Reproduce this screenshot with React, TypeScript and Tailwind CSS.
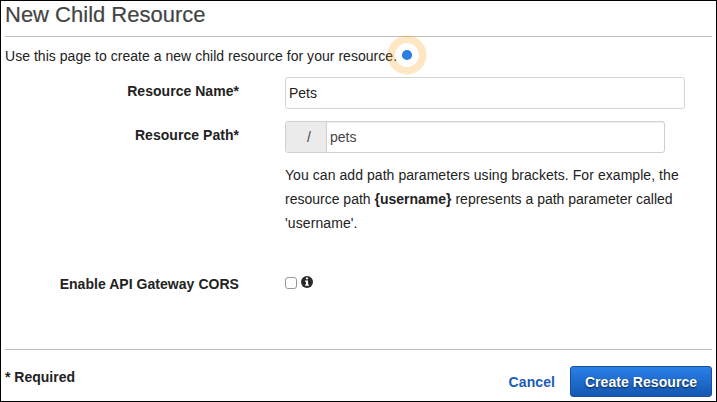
import React from "react";

function Label({ children }: { children: React.ReactNode }) {
  return (
    <div className="w-[238px] shrink-0 text-right font-bold whitespace-nowrap leading-6 tracking-[0.04px]">
      {children}
    </div>
  );
}

function InfoIcon() {
  return (
    <svg className="-mt-[2px] ml-1 h-3 w-3 shrink-0" viewBox="0 0 12 12" aria-label="Info">
      <circle cx="6" cy="6" r="6" fill="#2a2a2a" />
      <path d="M5 1.6h2v1.7H5zM4 4.6h3v3.8h1v1.3H4V8.4h1V5.8H4z" fill="#fff" />
    </svg>
  );
}

function Beacon() {
  return (
    <svg className="absolute left-[382px] -top-[9px] h-10 w-10" viewBox="0 0 40 40">
      <circle cx="20" cy="20" r="15.7" fill="none" stroke="#ff9900" strokeOpacity="0.23" strokeWidth="7.6" />
      <circle cx="20" cy="20" r="5.1" fill="#2e7de0" />
    </svg>
  );
}

export default function App() {
  return (
    <div className="flex h-[402px] w-[717px] flex-col overflow-hidden border border-black bg-white pl-1 pr-1 font-['Liberation_Sans',Arial,sans-serif] text-sm text-[#222]">
      <h1 className="h-[35px] shrink-0 whitespace-nowrap text-[22px] leading-[27px] text-[#444] [-webkit-text-stroke:0.2px_#444]">
        New Child Resource
      </h1>
      <hr className="shrink-0 border-[#bfbfbf]" />
      <div className="flex h-10 shrink-0 pt-[7px]">
        <p className="relative h-6 whitespace-nowrap leading-6 tracking-[0.035px]">
          Use this page to create a new child resource for your resource.
          <Beacon />
        </p>
      </div>
      <div className="flex h-11 shrink-0">
        <div className="-ml-1 flex pt-[2px]">
          <Label>Resource Name*</Label>
        </div>
        <div className="ml-[46px] flex h-8 w-[400px] items-center rounded-[3px] border border-[#d5d5d5] pl-[3px]">
          Pets
        </div>
      </div>
      <div className="flex h-11 shrink-0">
        <div className="-ml-1 flex pt-[2px]">
          <Label>Resource Path*</Label>
        </div>
        <div className="ml-[46px] flex h-8 w-[380px] rounded-[3px] border border-[#d0d0d0] text-[#444]">
          <span className="flex w-[41px] items-center rounded-l-[2px] border-r border-[#d0d0d0] bg-[#ebebeb] pl-[21px]">/</span>
          <span className="flex flex-1 items-center pl-[3px] shadow-[inset_0_1px_1px_rgba(0,0,0,0.06)]">pets</span>
        </div>
      </div>
      <p className="-mt-[2px] ml-[280px] h-[109px] shrink-0 whitespace-nowrap leading-6">
        <span className="tracking-[0.06px]">
          You can add path parameters using brackets. For example, the
        </span>
        <br />
        resource path <b>{"{username}"}</b> represents a path parameter called
        <br />
        <span className="tracking-[0.1px]">'username'.</span>
      </p>
      <div className="flex h-[77px] shrink-0">
        <div className="-ml-1 flex">
          <Label>Enable API Gateway CORS</Label>
        </div>
        <div className="ml-[46px] mt-[5px] flex h-3 items-center">
          <span className="h-3 w-3 rounded-[3px] border border-[#999] bg-white" />
          <InfoIcon />
        </div>
      </div>
      <hr className="shrink-0 border-[#bfbfbf]" />
      <footer className="flex h-[51px] shrink-0 items-start justify-between">
        <span className="pt-[15px] font-bold leading-6">* Required</span>
        <div className="flex items-start pt-4">
          <button className="mr-[15px] pt-[6px] font-bold text-[#1c5bb8] tracking-[0.08px]">Cancel</button>
          <button className="h-[31px] w-[142px] whitespace-nowrap rounded-[3px] border border-[#1a4f9c] bg-linear-to-b from-[#2a80e8] to-[#1458b3] text-center font-bold text-white tracking-[0.06px] [text-shadow:0_1px_2px_rgba(0,0,0,0.7)]">
            Create Resource
          </button>
        </div>
      </footer>
    </div>
  );
}
